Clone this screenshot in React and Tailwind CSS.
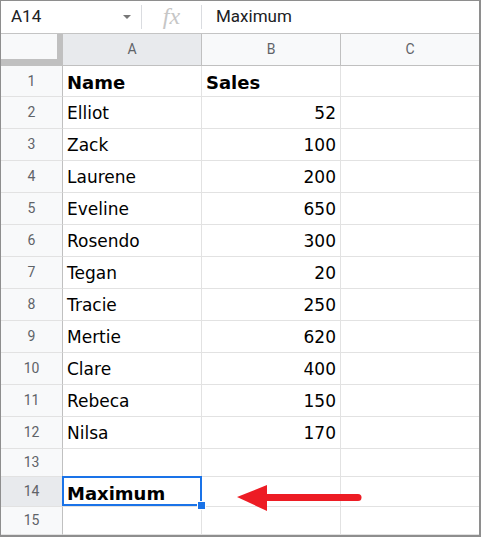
import React from 'react';

const rows = [
  ['Name', 'Sales', true],
  ['Elliot', '52'],
  ['Zack', '100'],
  ['Laurene', '200'],
  ['Eveline', '650'],
  ['Rosendo', '300'],
  ['Tegan', '20'],
  ['Tracie', '250'],
  ['Mertie', '620'],
  ['Clare', '400'],
  ['Rebeca', '150'],
  ['Nilsa', '170'],
];

const cellFont = { fontFamily: '"DejaVu Sans", Verdana, sans-serif' };
const headFont = { fontFamily: 'Roboto, Arial, sans-serif' };

function Arrow() {
  return (
    <svg
      className="absolute left-[28px] top-[3px] z-10 overflow-visible"
      width="140"
      height="36"
      viewBox="0 0 140 36"
    >
      <polygon points="7,17 37,5 37,31" fill="#ed1c24" />
      <line x1="36" y1="17.5" x2="128" y2="17.5" stroke="#ed1c24" strokeWidth="7" strokeLinecap="round" />
    </svg>
  );
}

function RowHead({ n, active }) {
  return (
    <div
      className={`${active ? 'bg-[#e8eaed]' : 'bg-[#f8f9fa]'} border-r border-b border-r-[#c0c0c0] border-b-[#e2e2e2] flex items-center justify-center text-[14px] text-[#5f6368]`}
      style={headFont}
    >
      {n}
    </div>
  );
}

export default function App() {
  return (
    <div
      className="w-[481px] h-[537px] overflow-hidden bg-white border-t border-l border-r-2 border-b-2 border-[#8e8e8e] flex flex-col"
      style={headFont}
    >
      {/* Formula bar */}
      <div className="h-[33px] shrink-0 flex items-center border-b border-[#c4c4c4]">
        <div className="w-[140px] h-full flex items-center pl-[10px] pr-[10px] justify-between">
          <span className="text-[17px] text-[#202124]">A14</span>
          <span className="w-0 h-0 border-l-[4px] border-r-[4px] border-t-[4px] border-l-transparent border-r-transparent border-t-[#777]" />
        </div>
        <div className="w-px h-[24px] bg-[#dadce0]" />
        <div className="w-[59px] h-full flex items-center justify-center">
          <span
            className="text-[24px] italic text-[#c6c6c6] leading-none -mt-[2px]"
            style={{ fontFamily: '"Liberation Serif", "Times New Roman", serif' }}
          >
            fx
          </span>
        </div>
        <div className="w-px h-[24px] bg-[#dadce0]" />
        <span className="pl-[14px] text-[17px] text-[#202124]">Maximum</span>
      </div>

      {/* Column headers */}
      <div className="h-[32px] shrink-0 grid grid-cols-[62px_139px_139px_1fr] border-b border-[#c0c0c0] text-[14px] text-[#5f6368]">
        <div className="bg-[#c0c0c0] pr-[6px] pb-[6px]">
          <div className="w-full h-full bg-[#f8f9fa]" />
        </div>
        <div className="bg-[#e8eaed] border-r border-[#c0c0c0] flex items-center justify-center">A</div>
        <div className="bg-[#f8f9fa] border-r border-[#c0c0c0] flex items-center justify-center">B</div>
        <div className="bg-[#f8f9fa] flex items-center justify-center">C</div>
      </div>

      {/* Body */}
      <div className="grid grid-cols-[62px_139px_139px_1fr] grid-rows-[31px_repeat(11,32px)_28px_30px_28px] text-[17px] text-black" style={cellFont}>
        {rows.map(([name, val, bold], i) => (
          <React.Fragment key={i}>
            <RowHead n={i + 1} />
            <div className={`border-r border-b border-[#e2e2e2] flex items-center pl-1 pt-[3px] ${bold ? 'font-bold text-[18px]' : ''}`}>
              {name}
            </div>
            <div className={`border-r border-b border-[#e2e2e2] flex items-center pt-[3px] ${bold ? 'font-bold text-[18px] pl-1' : 'justify-end pr-1'}`}>
              {val}
            </div>
            <div className="border-b border-[#e2e2e2]" />
          </React.Fragment>
        ))}

        {/* Row 13 */}
        <RowHead n={13} />
        <div className="border-r border-b border-[#e2e2e2]" />
        <div className="border-r border-b border-[#e2e2e2]" />
        <div className="border-b border-[#e2e2e2]" />

        {/* Row 14 */}
        <RowHead n={14} active />
        <div className="relative border-r border-b border-[#e2e2e2] flex items-center pl-1 pt-[3px] font-bold text-[18px]">
          Maximum
          <div className="absolute -top-px -left-px right-[-1px] bottom-0 border-2 border-[#1a73e8] pointer-events-none" />
          <div className="absolute right-[-5px] bottom-[-4px] w-[9px] h-[9px] bg-[#1a73e8] border border-white z-10" />
        </div>
        <div className="relative border-r border-b border-[#e2e2e2]">
          <Arrow />
        </div>
        <div className="border-b border-[#e2e2e2]" />

        {/* Row 15 */}
        <RowHead n={15} />
        <div className="border-r border-b border-[#e2e2e2]" />
        <div className="border-r border-b border-[#e2e2e2]" />
        <div className="border-b border-[#e2e2e2]" />
      </div>
    </div>
  );
}
